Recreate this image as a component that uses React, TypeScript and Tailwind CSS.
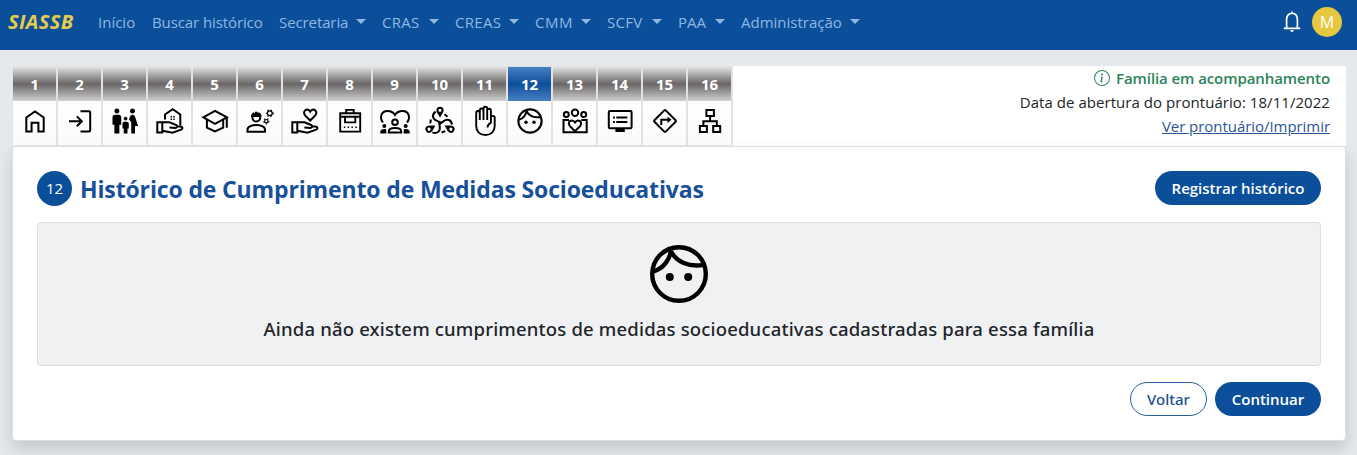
import type { ReactNode } from 'react';
import { MdFamilyRestroom } from 'react-icons/md';
import { BsInfoCircle } from 'react-icons/bs';

const nav = [
  { label: 'Início', box: 'w-[38px]', menu: false },
  { label: 'Buscar histórico', box: 'w-[111px] tracking-[-0.1px]', menu: false },
  { label: 'Secretaria', box: 'w-[87px] tracking-[-0.1px]', menu: true },
  { label: 'CRAS', box: 'w-[57px] tracking-[0.3px]', menu: true },
  { label: 'CREAS', box: 'w-[64px] tracking-[0.3px]', menu: true },
  { label: 'CMM', box: 'w-[56px] tracking-[0.5px]', menu: true },
  { label: 'SCFV', box: 'w-[55px] tracking-[0.3px]', menu: true },
  { label: 'PAA', box: 'w-[47px]', menu: true },
  { label: 'Administração', box: 'w-[119px]', menu: true },
];

function Drawing({ children }: { children: ReactNode }) {
  return (
    <svg viewBox="0 0 43 44" className="h-[44px] w-[43px]" fill="none" stroke="#000" strokeWidth="2">
      {children}
    </svg>
  );
}

function Face({ className, strokeWidth }: { className: string; strokeWidth: number }) {
  return (
    <svg viewBox="0 0 60 60" className={className} fill="none" stroke="#000" strokeWidth={strokeWidth}>
      <circle cx="30" cy="30" r="26.8" />
      <path d="M21.8 7C21 15 14.5 24.5 4.7 27.3M21.8 7C27 18 40 23.5 55 20.8" />
      <circle cx="20.8" cy="33" r="4" fill="#000" stroke="none" />
      <circle cx="39.2" cy="33" r="4" fill="#000" stroke="none" />
    </svg>
  );
}

const hand = (
  <>
    <path d="M9.3 21.2h5v10.2h-5z" />
    <path d="M14.3 21.3h7.2l6.6 2.7c1.9.9 1.2 3-.7 2.9l-6-.4M28.6 25.6h3.6c2.6 0 3 2.2 1 3L24.5 31.7l-10.2-2" />
  </>
);

const gear = (cx: number, cy: number, r: number) => (
  <>
    <circle cx={cx} cy={cy} r={r} strokeWidth="1.2" />
    <circle cx={cx} cy={cy} r={r + 0.9} strokeWidth="1.2" strokeDasharray="1.3 1.9" />
  </>
);

const hug = (
  <>
    <circle cx="22" cy="9.3" r="2.6" />
    <path d="M20.2 11.6l1.8 3 1.8-3M17.6 10.6c-4 3-3.2 7.4 1 9l4.900 2.200M26.5 13.200l3 2.600" />
  </>
);

const steps: ReactNode[] = [
  <Drawing><path d="M13.3 30.4V16.5L22 10.4l8.7 6.1v13.9h-5.3v-8.6h-6.8v8.6z" /></Drawing>,
  <Drawing><path d="M22.5 10.2H31q1.2 0 1.2 1.2v17.8q0 1.2-1.2 1.2h-8.5M11 20.3h12.500M18.8 15.4l5 4.900-5 4.900" /></Drawing>,
  <MdFamilyRestroom className="ml-px mt-[5px] size-[30px] text-black" />,
  <Drawing>
    {hand}
    <path d="M17 18.500v-5l7.700-5.300 7.600 5.300v11" />
    <path d="M22.600 15.700h4.200M22.600 18.300h4.200" strokeWidth="1.400" strokeDasharray="1.500 1.200" />
  </Drawing>,
  <Drawing><path d="M10.300 16.300L22 9.900l11.900 6.400L22 22.800zM33.800 16.300v10.400M13.900 18.600v8L22 30.500l8.200-3.900v-8" /></Drawing>,
  <Drawing>
    <circle cx="18.3" cy="16.600" r="3.900" />
    <path d="M13 16c0-3 1.300-4.300 3-4.800l1 1.700v-2.200h2.600v2.200l1-1.700c1.700.5 3 1.800 3 4.800z" fill="#000" stroke="none" />
    <path d="M9.500 30.700v-2.200c0-3 5-4.500 8.800-4.500s8.700 1.500 8.700 4.500v2.200z" />
    {gear(31.800, 12.300, 2.400)}
    {gear(28.300, 20.200, 1.700)}
  </Drawing>,
  <Drawing>
    {hand}
    <path d="M27.200 19.500l-4.700-4.600c-1.800-1.900-1.900-4.200-.4-5.500 1.600-1.400 4-.9 5.100 1.200 1.100-2.100 3.500-2.600 5.100-1.200 1.500 1.300 1.400 3.600-.4 5.500z" />
  </Drawing>,
  <Drawing>
    <path d="M12.200 12.300h20v18.300h-20zM12.200 15.700h20M18.200 12.300V8.900h7.500v3.400M17 15.700v5.700h10.300v-5.700" strokeWidth="1.900" />
    <path d="M15.800 26.300h13" strokeWidth="1.500" strokeDasharray="1.500 2.300" />
  </Drawing>,
  <Drawing>
    <path d="M10 21.500C6.500 17.500 7.500 10 14.500 10c3.500 0 6 1.500 7.500 4 1.500-2.500 4-4 7.500-4 7 0 8 7.500 4.500 11.500" />
    <circle cx="22" cy="21.300" r="2.800" />
    <path d="M15.800 31.600v-1.300c0-2.300 3-3.400 6.200-3.400s6.200 1.100 6.200 3.400v1.300z" />
    <g fill="#000" stroke="none">
      <circle cx="11.300" cy="25" r="2" /><circle cx="32.700" cy="25" r="2" />
      <path d="M7.300 32.500v-1.700c0-2 2.300-3 5.800-2.600l.3 4.300zM36.700 32.500v-1.700c0-2-2.300-3-5.800-2.600l-.3 4.300z" />
    </g>
  </Drawing>,
  <Drawing>
    {hug}
    <g transform="rotate(120 22 21.900)">{hug}</g>
    <g transform="rotate(240 22 21.900)">{hug}</g>
  </Drawing>,
  <Drawing>
    <path d="M13.200 25V12c0-2.600 3.600-2.600 3.600 0v7M16.800 19V9.500c0-2.600 3.700-2.600 3.700 0V19M20.500 19V7.500c0-2.300 3.700-2.300 3.700 0V19M24.200 19V9.500c0-2.400 3.700-2.400 3.700 0v12.300c-2 .7-3.200 2.300-3.400 4.700M27.900 21.500v-4.800c0-2.500 3.800-2.500 3.800 0V25c0 5.500-3.800 9-9.200 9-5.600 0-9.300-3.500-9.300-9" strokeWidth="1.900" />
  </Drawing>,
  <Face className="ml-px mt-[7px] size-[26px]" strokeWidth={4.8} />,
  <Drawing>
    <circle cx="13.300" cy="13.400" r="2.500" /><circle cx="22" cy="11.700" r="3.200" /><circle cx="30.700" cy="13.400" r="2.500" />
    <path d="M16 18.900h-5.500v12.300h23.200V18.900h-5.400M22 30.200l-5-5c-3.500-4 2-8.200 5-3.700 3-4.500 8.500-.3 5 3.700z" />
  </Drawing>,
  <Drawing>
    <rect x="10.800" y="10" width="22.800" height="17.200" rx="1.200" />
    <path d="M17.400 27h9.400v4h-9.400z" fill="#000" stroke="none" />
    <path d="M15 16.500h1.900M18.300 16.500h11M15 21h1.900M18.300 21h11" />
  </Drawing>,
  <Drawing>
    <rect x="14" y="12" width="16" height="16" rx="1" transform="rotate(45 22 20)" />
    <path d="M18.300 24v-5.300h7.500" />
    <path d="M24.500 15.400l4 3.300-4 3.300z" fill="#000" stroke="none" />
  </Drawing>,
  <Drawing><path d="M18.400 8.900h7.500v6h-7.500zM11.900 25h7v6.100h-7zM25.200 25h7v6.100h-7zM22.100 15v5M15.400 25v-4.800h13.400V25" /></Drawing>,
];

function Navbar() {
  return (
    <header className="flex h-[50px] items-start bg-[#0b4f9a] text-[15px] text-[#8fb7e0]">
      <div className="ml-[8px] mt-[8px] w-[90px] text-[20px] font-bold italic leading-[28px] tracking-[0.4px] text-[#e6cb4c]">SIASSB</div>
      <nav className="mt-[10px] flex gap-[16px] whitespace-nowrap leading-[24px]">
        {nav.map((item) => (
          <a key={item.label} className={`flex justify-between ${item.box}`}>
            {item.label}
            {item.menu && (
              <svg viewBox="0 0 10 5" className="mt-[9px] h-[5px] w-[10px]" fill="currentColor"><path d="M0 0h10L5 5z" /></svg>
            )}
          </a>
        ))}
      </nav>
      <svg viewBox="0 0 18 22" className="ml-auto mt-[11px] h-[22px] w-[18px]" fill="none" stroke="#fff" strokeWidth="1.700">
        <path d="M.8 17.300h16.400M3.600 17V8.500C3.600 5 5.500 2.300 9 2.300s5.400 2.700 5.400 6.200V17M9 .4v2" />
        <path d="M7 19.300h4q-.5 1.800-2 1.800t-2-1.800z" fill="#fff" stroke="none" />
      </svg>
      <div className="ml-[11px] mr-[15px] mt-[7px] flex size-[30px] items-center justify-center rounded-full bg-[#e6c740] text-[16px] text-white">M</div>
    </header>
  );
}

export default function App() {
  return (
    <div className="h-[455px] overflow-hidden bg-[#e5e9ee] font-['Open_Sans','Noto_Sans',sans-serif] text-[#212529]">
      <Navbar />
      <div className="ml-[12px] mr-[11px] mt-[16px] flex h-[80px] justify-between bg-white">
        <div className="flex gap-[2px] bg-[#e2e2e2] py-px pl-px pr-[2px]">
          {steps.map((icon, i) => (
            <div key={i} className="w-[43px]">
              <div
                className={
                  i === 11
                    ? 'flex h-[34px] items-center justify-center bg-linear-to-b from-[#4680c4] via-[#0b4f9a] to-[#4680c4] pt-px text-[15px] font-bold text-white'
                    : 'flex h-[34px] items-center justify-center bg-linear-to-b from-[#e2e2e2] via-[#6b6768] to-[#d2d2d2] pt-px text-[15px] font-bold text-white'
                }
              >
                {i + 1}
              </div>
              <div className="flex h-[44px] items-start justify-center bg-linear-to-b from-white to-[#fafafa]">{icon}</div>
            </div>
          ))}
        </div>
        <div className="mr-[16px] text-right text-[15px] leading-[24px]">
          <div className="flex items-center justify-end gap-[6px] font-semibold tracking-[-0.08px] text-[#2b8358]">
            <BsInfoCircle className="size-[16px]" />
            <span>Família em acompanhamento</span>
          </div>
          <div className="tracking-[0.05px]">Data de abertura do prontuário: 18/11/2022</div>
          <a className="tracking-[-0.05px] text-[#2a5599] underline">Ver prontuário/Imprimir</a>
        </div>
      </div>
      <main className="ml-[12px] mr-[11px] h-[295px] rounded-[4px] border border-[#dcdfe2] bg-white px-[24px] pt-[24px] shadow-[0_8px_16px_rgba(0,0,0,0.15)]">
        <div className="flex h-[35px] items-start">
          <div className="flex size-[35px] items-center justify-center rounded-full bg-[#0b4f9a] text-[15px] text-white">12</div>
          <h1 className="ml-[8px] whitespace-nowrap text-[23px] font-bold leading-[36px] tracking-[-0.14px] text-[#17509a]">Histórico de Cumprimento de Medidas Socioeducativas</h1>
          <button className="ml-auto h-[34px] w-[166px] whitespace-nowrap rounded-full bg-[#0b4f9a] text-[15px] font-semibold text-white">Registrar histórico</button>
        </div>
        <section className="mt-[16px] flex h-[144px] flex-col items-center rounded-[4px] border border-[#dcdfe2] bg-[#f0f1f3] pt-[21px]">
          <Face className="size-[60px]" strokeWidth={4.4} />
          <p className="mt-[11px] whitespace-nowrap font-['Noto_Sans',sans-serif] text-[18.5px] font-medium leading-[28px] tracking-[0.17px]">Ainda não existem cumprimentos de medidas socioeducativas cadastradas para essa família</p>
        </section>
        <div className="mt-[16px] flex justify-end gap-[8px] text-[15px]">
          <button className="h-[34px] w-[77px] rounded-full border border-[#2a5f9f] font-['Noto_Sans',sans-serif] font-medium text-[#1d4f91]">Voltar</button>
          <button className="h-[34px] w-[106px] rounded-full bg-[#0b4f9a] font-semibold text-white">Continuar</button>
        </div>
      </main>
    </div>
  );
}
